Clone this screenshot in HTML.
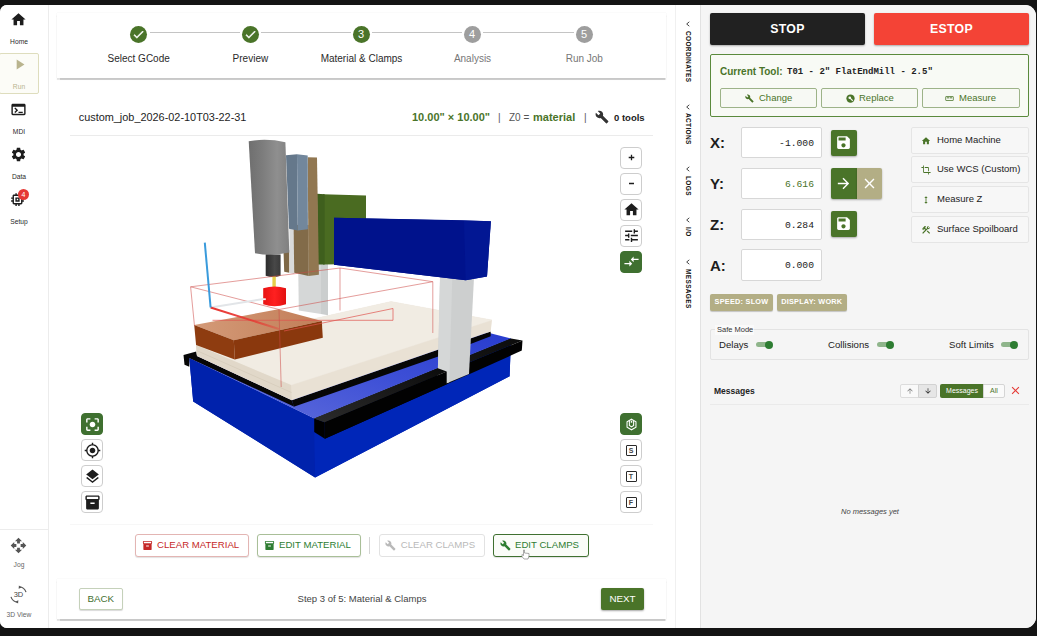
<!DOCTYPE html>
<html lang="en">
<head>
<meta charset="utf-8">
<title>Run Job - Material &amp; Clamps</title>
<style>
*{box-sizing:border-box;margin:0;padding:0}
html,body{width:1037px;height:636px;overflow:hidden;background:#141414;font-family:"Liberation Sans",sans-serif;color:#222}
.abs{position:absolute}
#win{position:absolute;left:0;top:5px;width:1036px;height:623px;background:#fff;border-radius:7px 11px 11px 7px;overflow:hidden}
/* everything inside #win is positioned in page coords via this wrapper */
#pg{position:absolute;left:0;top:-5px;width:1037px;height:636px}
svg{display:block;overflow:visible}
/* sidebar */
#side{left:0;top:0;width:49px;height:636px;border-right:1px solid #ececec;background:#fff}
.nav{position:absolute;left:0;width:38px;text-align:center;font-size:6.700px;color:#2a2a2a}
.nav svg{position:absolute}
.nav span{position:absolute;left:0;width:38px;text-align:center}
/* stepper */
.card{background:#fff;box-shadow:0 1.500px 1px rgba(0,0,0,.2),0 0 1px rgba(0,0,0,.1)}
.step{position:absolute;top:25.500px;width:17px;height:17px;border-radius:50%;background:#4a7429;color:#fff;font-size:11px;line-height:17px;text-align:center}
.step.g{background:#9e9e9e}
.slabel{position:absolute;top:52px;width:120px;text-align:center;font-size:10px;color:#2a2a2a;line-height:13px}
.slabel.g{color:#777}
.sline{position:absolute;top:32px;height:1px;background:#c4c4c4}
/* viewer buttons */
.vb{position:absolute;width:22px;height:21.500px;border:1px solid #cdcdcd;border-radius:4px;background:#fff}
.vb.on{background:#3f7030;border-color:#3f7030}
.vb svg{position:absolute;left:1.500px;top:1.250px}
/* action buttons */
.ab{position:absolute;top:534px;height:22.500px;border:1px solid;border-radius:3px;font-size:9.650px;line-height:20px;white-space:nowrap;background:#fff}
.ab svg{position:absolute;left:5.500px;top:5px}
.ab span{position:absolute;left:21px;top:0}
/* right panel */
#right{left:700px;top:0;width:337px;height:636px;background:#f5f5f5;border-left:1px solid #e2e2e2}
.big{position:absolute;top:13px;height:32px;border-radius:2px;color:#fff;font-weight:bold;font-size:12.300px;letter-spacing:.3px;line-height:32px;text-align:center;box-shadow:0 1px 2px rgba(0,0,0,.3)}
.tb{position:absolute;top:88px;height:20px;border:1px solid #9db388;border-radius:2px;font-size:9.500px;line-height:18.500px;color:#4a7429;background:#f7f9f4}
.tb svg{position:absolute;top:5px}
.tb span{position:absolute;top:0}
.ax{position:absolute;left:710px;font-size:15px;font-weight:bold;color:#1d1d1d;line-height:20px}
.inp{position:absolute;left:741px;width:81px;height:31.500px;border:1px solid #d7d7d7;border-radius:2px;background:#fff;font-family:"Liberation Mono",monospace;font-size:9.700px;line-height:31.500px;text-align:right;padding-right:7px;color:#222}
.sq{position:absolute;width:25.500px;height:25.500px;background:#4a7429;border-radius:2px;box-shadow:0 1px 2px rgba(0,0,0,.3)}
.sq svg{position:absolute;left:4px;top:4px}
.rb{position:absolute;left:911px;width:118px;height:27.200px;border:1px solid #e5e5e5;border-radius:2px;background:#f7f7f7;font-size:9.500px;line-height:24.500px;color:#222}
.rb svg{position:absolute;left:9px;top:8px}
.rb span{position:absolute;left:25px;top:0;white-space:nowrap}
.chip{position:absolute;top:294px;height:16.500px;border-radius:2px;background:#b3ae85;color:#fff;font-size:7.300px;font-weight:bold;line-height:16.500px;text-align:center;letter-spacing:.25px;box-shadow:0 1px 1px rgba(0,0,0,.2)}
.tg{position:absolute;top:340.500px;width:17px;height:8px}
.tg i{position:absolute;left:0;top:1.5px;width:14px;height:5px;border-radius:3px;background:#8fb58b}
.tg b{position:absolute;right:0;top:0;width:8px;height:8px;border-radius:50%;background:#2e7d32}
.tl{position:absolute;top:339px;font-size:9.600px;line-height:12px;color:#222;white-space:nowrap}
.vt{position:absolute;left:682px;width:12px;font-size:6.500px;font-weight:bold;letter-spacing:.35px;color:#111;writing-mode:vertical-rl;white-space:nowrap;line-height:12px}
.vc{position:absolute;left:684px;width:8px;height:8px}
</style>
</head>
<body>
<div id="win"><div id="pg">

<!-- SIDEBAR -->
<div id="side" class="abs">
  <div class="nav" style="top:10px;height:40px">
    <svg style="left:10px;top:1px" width="17" height="17" viewBox="0 0 24 24"><path fill="#1d1d1d" d="M10 20v-6h4v6h5v-8h3L12 3 2 12h3v8z"/></svg>
    <span style="top:28px">Home</span>
  </div>
  <div class="abs" style="left:-1px;top:53px;width:40px;height:41px;border:1px solid #deddbd;border-radius:2px;background:#fcfcf7"></div>
  <div class="nav" style="top:55px;height:40px;color:#b9b48e">
    <svg style="left:11px;top:1px" width="17" height="17" viewBox="0 0 24 24"><path fill="#b9b48e" d="M8 5v14l11-7z"/></svg>
    <span style="top:28px">Run</span>
  </div>
  <div class="nav" style="top:100px;height:40px">
    <svg style="left:10px;top:1px" width="17" height="17" viewBox="0 0 24 24"><path fill="#1d1d1d" d="M20 4H4c-1.11 0-2 .9-2 2v12c0 1.1.89 2 2 2h16c1.1 0 2-.9 2-2V6c0-1.1-.89-2-2-2zm0 14H4V8h16v10zm-2-1h-6v-2h6v2zM7.500 17l-1.410-1.410L8.670 13l-2.590-2.590L7.500 9l4 4-4 4z"/></svg>
    <span style="top:28px">MDI</span>
  </div>
  <div class="nav" style="top:145px;height:40px">
    <svg style="left:10px;top:1px" width="17" height="17" viewBox="0 0 24 24"><path fill="#1d1d1d" d="M19.140 12.940c.04-.3.06-.61.06-.94 0-.32-.02-.64-.07-.94l2.030-1.580c.18-.14.23-.41.12-.61l-1.920-3.320c-.12-.22-.37-.29-.59-.22l-2.390.96c-.5-.38-1.030-.7-1.620-.94l-.36-2.540c-.04-.24-.24-.41-.48-.41h-3.840c-.24 0-.43.17-.47.41l-.36 2.540c-.59.24-1.130.57-1.620.94l-2.390-.96c-.22-.08-.47 0-.59.22L2.740 8.870c-.12.21-.08.47.12.61l2.030 1.580c-.05.3-.09.63-.09.94s.02.640.07.940l-2.030 1.580c-.18.14-.23.41-.12.61l1.920 3.320c.12.22.37.29.59.22l2.390-.96c.5.38 1.030.7 1.620.94l.36 2.540c.05.24.24.41.48.41h3.840c.24 0 .44-.17.47-.41l.36-2.540c.59-.24 1.130-.56 1.620-.94l2.390.96c.22.08.47 0 .59-.22l1.920-3.320c.12-.22.07-.47-.12-.61l-2.010-1.580zM12 15.600c-1.980 0-3.600-1.620-3.600-3.600s1.620-3.600 3.600-3.600 3.600 1.620 3.600 3.600-1.620 3.600-3.600 3.600z"/></svg>
    <span style="top:28px">Data</span>
  </div>
  <div class="nav" style="top:190px;height:40px">
    <svg style="left:9px;top:1px" width="17" height="17" viewBox="0 0 24 24"><path fill="#1d1d1d" d="M15 9H9v6h6V9zm-2 4h-2v-2h2v2zm8-2V9h-2V7c0-1.100-.9-2-2-2h-2V3h-2v2h-2V3H9v2H7c-1.100 0-2 .9-2 2v2H3v2h2v2H3v2h2v2c0 1.100.9 2 2 2h2v2h2v-2h2v2h2v-2h2c1.100 0 2-.9 2-2v-2h2v-2h-2v-2h2zm-4 6H7V7h10v10z"/></svg>
    <div class="abs" style="left:18px;top:-1px;width:11px;height:11px;border-radius:50%;background:#e53935;color:#fff;font-size:7px;line-height:11px;text-align:center">4</div>
    <span style="top:28px">Setup</span>
  </div>
  <div class="abs" style="left:0;top:529px;width:48px;height:1px;background:#ececec"></div>
  <div class="nav" style="top:536px;height:40px;color:#666">
    <svg style="left:10px;top:1px" width="17" height="17" viewBox="0 0 24 24"><path fill="#555" d="M10 9h4V6h3l-5-5-5 5h3v3zm-1 1H6V7l-5 5 5 5v-3h3v-4zm14 2l-5-5v3h-3v4h3v3l5-5zm-9 3h-4v3H7l5 5 5-5h-3v-3z"/></svg>
    <span style="top:25px">Jog</span>
  </div>
  <div class="nav" style="top:585px;height:40px;color:#666">
    <svg style="left:9px;top:0px" width="19" height="19" viewBox="0 0 24 24"><g fill="none" stroke="#555" stroke-width="1.5"><path d="M13 2.200A10 10 0 0 1 21.500 9"/><path d="M11 21.800A10 10 0 0 1 2.500 15"/></g><path fill="#555" d="M12.500 .5l3.500 2.500-3.800 1.800zM11.500 23.500l-3.500-2.500 3.800-1.800z"/><text x="12" y="15.500" font-family="Liberation Sans, sans-serif" font-size="9.500" text-anchor="middle" fill="#444">3D</text></svg>
    <span style="top:26px">3D View</span>
  </div>
</div>

<!-- STEPPER -->
<div class="abs card" id="stepper" style="left:57px;top:13px;width:609px;height:65px"></div>
<div class="sline" style="left:149.500px;width:90px"></div>
<div class="sline" style="left:261px;width:89.500px"></div>
<div class="sline" style="left:372px;width:89.500px"></div>
<div class="sline" style="left:483px;width:90.500px"></div>
<div class="step" style="left:130px"><svg style="position:absolute;left:2px;top:2px" width="13" height="13" viewBox="0 0 24 24"><path fill="#fff" stroke="#fff" stroke-width="1" d="M9 16.170L4.830 12l-1.420 1.410L9 19 21 7l-1.410-1.410z"/></svg></div>
<div class="step" style="left:241.500px"><svg style="position:absolute;left:2px;top:2px" width="13" height="13" viewBox="0 0 24 24"><path fill="#fff" stroke="#fff" stroke-width="1" d="M9 16.170L4.830 12l-1.420 1.410L9 19 21 7l-1.410-1.410z"/></svg></div>
<div class="step" style="left:352.500px">3</div>
<div class="step g" style="left:463.500px">4</div>
<div class="step g" style="left:575.500px">5</div>
<div class="slabel" style="left:78.7px">Select GCode</div>
<div class="slabel" style="left:190.4px">Preview</div>
<div class="slabel" style="left:301.5px">Material &amp; Clamps</div>
<div class="slabel g" style="left:412.5px">Analysis</div>
<div class="slabel g" style="left:524.3px">Run Job</div>

<!-- MAIN VIEW -->
<div class="abs" id="main" style="left:0;top:0;width:700px;height:636px">
<div class="abs" style="left:78.700px;top:111px;font-size:10.900px;line-height:13px;color:#1d1d1d">custom_job_2026-02-10T03-22-31</div>
<div class="abs" style="left:412px;top:111px;font-size:11px;line-height:13px;font-weight:bold;color:#4a7429;white-space:nowrap">10.00" × 10.00"</div>
<div class="abs" style="left:498px;top:111px;font-size:10px;line-height:13px;color:#555">|</div>
<div class="abs" style="left:509px;top:111px;font-size:10px;line-height:13px;color:#555;white-space:nowrap">Z0 =</div>
<div class="abs" style="left:533px;top:111px;font-size:11px;line-height:13px;font-weight:bold;color:#4a7429">material</div>
<div class="abs" style="left:584px;top:111px;font-size:10px;line-height:13px;color:#555">|</div>
<div class="abs" style="left:595px;top:110px"><svg width="14" height="14" viewBox="0 0 24 24" ><path fill="#333" d="M22.700 19l-9.100-9.100c.9-2.300.4-5-1.500-6.900-2-2-5-2.400-7.400-1.300L9 6 6 9 1.600 4.700C.4 7.100.9 10.100 2.900 12.100c1.900 1.900 4.600 2.400 6.900 1.500l9.100 9.100c.4.4 1 .4 1.400 0l2.300-2.300c.5-.4.5-1.100.1-1.400z"/></svg></div>
<div class="abs" style="left:614px;top:111px;font-size:9.500px;line-height:13px;font-weight:bold;color:#222;white-space:nowrap">0 tools</div>
<div class="abs" style="left:70px;top:135px;width:583px;height:1px;background:#ebebeb"></div>
<!--SCENE-->
<svg class="abs" style="left:0;top:0" width="700" height="636" viewBox="0 0 700 636">
<defs>
<linearGradient id="gcyl" x1="0" x2="1" y1="0" y2="0"><stop offset="0" stop-color="#6f6f6f"/><stop offset=".35" stop-color="#7d7d7d"/><stop offset=".7" stop-color="#8f8f8f"/><stop offset="1" stop-color="#808080"/></linearGradient>
<linearGradient id="gcol" x1="0" x2="1" y1="0" y2="0"><stop offset="0" stop-color="#2c2c2c"/><stop offset=".6" stop-color="#484848"/><stop offset="1" stop-color="#3a3a3a"/></linearGradient>
<linearGradient id="gtop" x1="0" x2="1" y1="1" y2="0"><stop offset="0" stop-color="#6370dc"/><stop offset=".5" stop-color="#3d4fd6"/><stop offset="1" stop-color="#2237cc"/></linearGradient>
<linearGradient id="grail" x1="0" x2="1" y1="1" y2="0"><stop offset="0" stop-color="#2b2b2b"/><stop offset="1" stop-color="#0c0c0c"/></linearGradient>
<linearGradient id="gred" x1="0" x2="1" y1="0" y2="0"><stop offset="0" stop-color="#e81212"/><stop offset=".5" stop-color="#ff2020"/><stop offset="1" stop-color="#e21010"/></linearGradient>
<linearGradient id="gxax" x1="0" x2="1" y1="0" y2="0"><stop offset="0" stop-color="#e8342f"/><stop offset=".6" stop-color="#e8342f" stop-opacity=".85"/><stop offset="1" stop-color="#e8342f" stop-opacity=".3"/></linearGradient>
<linearGradient id="gstk" x1="0" x2="1" y1="0" y2="0"><stop offset="0" stop-color="#d49a78"/><stop offset="1" stop-color="#c27e58"/></linearGradient>
</defs>
<polygon points="189.3,358 314.2,418.4 511,338.4 509.6,376.3 315.1,477.4 193.2,401.5" fill="#0025b4" />
<polygon points="189.3,358 314.2,418.4 315.1,477.4 193.2,401.5" fill="#0022ac" />
<polygon points="314.2,418.4 511,338.4 509.6,376.3 315.1,477.4" fill="#0026b8" />
<polygon points="189.3,358 391,308 511,338.4 314.2,418.4" fill="url(#gtop)" />
<polygon points="183.5,355 196.3,351.5 197,356 291.9,400.3 293.8,406.5 189.3,358 189.3,366.7 184.5,364.8" fill="#060606" />
<polygon points="291.9,400.3 490.7,331.6 490.7,336.3 437.5,356.7 293.8,406.7" fill="#060606" />
<polygon points="314.2,418.4 511,338.4 522.5,340.4 324.8,422.2" fill="url(#grail)" />
<polygon points="324.8,422.2 522.5,340.4 521.8,350.6 324.8,438.7" fill="#020202" />
<polygon points="314.2,418.4 324.8,422.2 324.8,438.7 314.2,431.9" fill="#000" />
<polygon points="196,345 391,301.5 492,320 490.7,331.6 291.9,400.3 197,356" fill="#e9e1d4" />
<polygon points="196,345 391,301.5 492,320 291,385" fill="#f1ece3" stroke="#f1ece3" stroke-width=".4"/>
<polygon points="196,345 291,385 291.9,400.3 197,356" fill="#e1d8c9" />
<line x1="196.500" y1="350.500" x2="291.500" y2="392.500" stroke="#cfc4b2" stroke-width=".5"/>
<polygon points="298,250 321,250 321,314.1 298.8,310.4" fill="#d5d7d7" />
<polygon points="321,250 328,250 328,315.3 321,314.1" fill="#cbcece" />
<polygon points="194.2,325.1 278.3,309.3 321.8,320.9 233.8,340.2" fill="url(#gstk)" />
<polygon points="194.2,325.1 233.8,340.2 234.8,359.6 196.1,344.9" fill="#8e3c10" />
<polygon points="233.8,340.2 321.8,320.9 322.8,337.7 234.8,359.6" fill="#8a380d" />
<g stroke="#e0534d" stroke-width=".7" fill="none"><path d="M212.500 320.300H393V308.500L284 331"/></g>
<polygon points="440.2,270 474.4,270 469,374 447.4,383 437.5,386" fill="#cdcfcf" />
<polygon points="440.2,270 452.5,270 449.3,382.2 437.5,386" fill="#d5d7d7" />
<polygon points="314.2,418.4 437.9,368.2 446.7,371.6 324.8,422.2" fill="url(#grail)" />
<polygon points="324.8,422.2 446.7,371.6 446.7,384.2 324.8,438.7" fill="#020202" />
<polygon points="323,194.2 366,195.6 366,264 323,264.4" fill="#4a6b21" />
<polygon points="317,193.8 324.7,194.3 324.7,264.4 318,264.4" fill="#3f5f1d" />
<polygon points="334,217.8 490.9,221.3 487,276.4 465.7,280.3 334,264.8" fill="#01158f" />
<polygon points="334,217.8 464,220.3 465.7,280.3 334,264.8" fill="#00128c" />
<polygon points="464,220.3 490.9,221.3 487,276.4 465.7,280.3" fill="#021793" />
<polygon points="283.5,250 289.3,250 289.3,272.7 284.2,271.8" fill="#7e6847" />
<polygon points="289.3,225 293.8,225 294.2,274 289.6,273" fill="#d9dada" />
<polygon points="293.6,225 308.6,225 308.6,276 294.2,272.7" fill="#826b49" />
<polygon points="307.7,157.2 317,157.6 318.9,274.7 308.6,276" fill="#917751" />
<polygon points="286,155.3 297,154.3 297.8,230.5 289,228.8" fill="#65788b" />
<polygon points="297,154.3 307.7,155.5 307.9,229.2 297.8,230.5" fill="#72879c" />
<path d="M248.700 141.200Q267 138 285.400 142.300L289.300 252.600Q272 256.500 255 253.200Z" fill="url(#gcyl)"/>
<path d="M265.700 254.500H280.600V275.800Q273 278.200 265.700 275.800Z" fill="url(#gcol)"/>
<rect x="272.400" y="276.500" width="3.400" height="11" fill="#e6d04a"/>
<g stroke="#cf4a46" stroke-width=".6" fill="none" opacity=".9"><path d="M190.600 286.800L340 268L432.800 281.700L279 309.500Z"/><path d="M190.600 286.800L194.500 326M340 268V310.500M432.800 281.700V333M279 309.500L281.200 387"/></g>
<line x1="210.600" y1="307.500" x2="265" y2="298.800" stroke="#e2e5e8" stroke-width="2"/>
<line x1="210.600" y1="307.500" x2="279" y2="329" stroke="url(#gxax)" stroke-width="2"/>
<line x1="204.800" y1="242.700" x2="210.600" y2="307.500" stroke="#3a9bdc" stroke-width="2"/>
<path d="M263.200 288.300Q274.600 284.500 286 288.300V304.300Q274.600 308.300 263.200 304.300Z" fill="url(#gred)"/>
<rect x="262.800" y="298.300" width="3" height="1.800" fill="#f4f4f4"/>
</svg>
<!--/SCENE-->
<!--VBTNS-->
<div class="vb" style="left:620px;top:147px"><svg width="17" height="17" viewBox="0 0 17 17"><path d="M5.700 8.500h5.600M8.500 5.700v5.600" stroke="#1d1d1d" stroke-width="1.300" fill="none"/></svg></div>
<div class="vb" style="left:620px;top:173px"><svg width="17" height="17" viewBox="0 0 17 17"><path d="M6 8.500h5" stroke="#1d1d1d" stroke-width="1.300" fill="none"/></svg></div>
<div class="vb" style="left:620px;top:199px"><svg width="17" height="17" viewBox="0 0 24 24"><path fill="#1d1d1d" d="M10 20v-6h4v6h5v-8h3L12 3 2 12h3v8z"/></svg></div>
<div class="vb" style="left:620px;top:225px"><svg width="17" height="17" viewBox="0 0 24 24"><path fill="#1d1d1d" d="M3 17v2h6v-2H3zM3 5v2h10V5H3zm10 16v-2h8v-2h-8v-2h-2v6h2zM7 9v2H3v2h4v2h2V9H7zm14 4v-2H11v2h10zm-6-4h2V7h4V5h-4V3h-2v6z"/></svg></div>
<div class="vb on" style="left:620px;top:251px"><svg width="17" height="17" viewBox="0 0 24 24"><path fill="#fff" d="M9.010 14H2v2h7.010v3L13 15l-3.990-4v3zm5.980-1v-3H22V8h-7.010V5L11 9l3.990 4z"/></svg></div>
<div class="vb on" style="left:81px;top:413.4px"><svg width="17" height="17" viewBox="0 0 24 24"><path fill="#fff" d="M12 8c-2.210 0-4 1.790-4 4s1.790 4 4 4 4-1.790 4-4-1.790-4-4-4zm-7 7H3v4c0 1.100.9 2 2 2h4v-2H5v-4zM5 5h4V3H5c-1.100 0-2 .9-2 2v4h2V5zm14-2h-4v2h4v4h2V5c0-1.100-.9-2-2-2zm0 16h-4v2h4c1.100 0 2-.9 2-2v-4h-2v4z"/></svg></div>
<div class="vb" style="left:81px;top:439.4px"><svg width="17" height="17" viewBox="0 0 24 24"><path fill="#1d1d1d" d="M12 8c-2.210 0-4 1.790-4 4s1.790 4 4 4 4-1.790 4-4-1.790-4-4-4zm8.940 3c-.46-4.170-3.770-7.480-7.940-7.940V1h-2v2.060C6.830 3.520 3.520 6.830 3.060 11H1v2h2.060c.46 4.170 3.770 7.480 7.940 7.940V23h2v-2.060c4.170-.46 7.480-3.770 7.940-7.940H23v-2h-2.060zM12 19c-3.870 0-7-3.130-7-7s3.130-7 7-7 7 3.130 7 7-3.130 7-7 7z"/></svg></div>
<div class="vb" style="left:81px;top:465.4px"><svg width="17" height="17" viewBox="0 0 24 24"><path fill="#1d1d1d" d="M11.990 18.540l-7.370-5.730L3 14.070l9 7 9-7-1.630-1.270-7.380 5.740zM12 16l7.360-5.730L21 9l-9-7-9 7 1.630 1.270L12 16z"/></svg></div>
<div class="vb" style="left:81px;top:491.4px"><svg width="17" height="17" viewBox="0 0 24 24"><path fill="#1d1d1d" d="M20 2H4c-1 0-2 .9-2 2v3.010c0 .72.43 1.340 1 1.690V20c0 1.100 1.100 2 2 2h14c.9 0 2-.9 2-2V8.700c.57-.35 1-.97 1-1.690V4c0-1.100-1-2-2-2zm-5 12H9v-2h6v2zm5-7H4V4h16v3z"/></svg></div>
<div class="vb on" style="left:620px;top:413.4px"><svg width="17" height="17" viewBox="0 0 24 24"><path d="M12 4.500l6.300 3.600v7.800L12 19.500l-6.300-3.600V8.100z" fill="none" stroke="#fff" stroke-width="1.500"/><path d="M9 6.800v6.700l3 2 3-2V6.800" fill="none" stroke="#fff" stroke-width="1.500"/><path d="M11 6.500h2v3h-2z" fill="#fff"/></svg></div>
<div class="vb" style="left:620px;top:439.4px"><div class="abs" style="left:4.500px;top:4.250px;width:11px;height:11px;border:1px solid #2a2a2a;border-radius:1px;font-size:7px;font-weight:bold;line-height:9px;text-align:center;color:#444">S</div></div>
<div class="vb" style="left:620px;top:465.4px"><div class="abs" style="left:4.500px;top:4.250px;width:11px;height:11px;border:1px solid #2a2a2a;border-radius:1px;font-size:7px;font-weight:bold;line-height:9px;text-align:center;color:#444">T</div></div>
<div class="vb" style="left:620px;top:491.4px"><div class="abs" style="left:4.500px;top:4.250px;width:11px;height:11px;border:1px solid #2a2a2a;border-radius:1px;font-size:7px;font-weight:bold;line-height:9px;text-align:center;color:#444">F</div></div>
<div class="abs" style="left:70px;top:524px;width:583px;height:1px;background:#f7f7f7"></div>
<div class="ab" style="left:135px;width:113.500px;border-color:#e3b5b3;color:#c62828;box-shadow:0 1px 1px rgba(0,0,0,.12)"><svg width="11" height="11" viewBox="0 0 24 24" ><path fill="#c62828" d="M20 2H4c-1 0-2 .9-2 2v3.010c0 .72.43 1.340 1 1.690V20c0 1.100 1.100 2 2 2h14c.9 0 2-.9 2-2V8.700c.57-.35 1-.97 1-1.690V4c0-1.100-1-2-2-2zm-5 12H9v-2h6v2zm5-7H4V4h16v3z"/></svg><span>CLEAR MATERIAL</span></div>
<div class="ab" style="left:257px;width:104px;border-color:#a9bf98;color:#2e7d32;box-shadow:0 1px 1px rgba(0,0,0,.12)"><svg width="11" height="11" viewBox="0 0 24 24" ><path fill="#2e7d32" d="M20 2H4c-1 0-2 .9-2 2v3.010c0 .72.43 1.340 1 1.690V20c0 1.100 1.100 2 2 2h14c.9 0 2-.9 2-2V8.700c.57-.35 1-.97 1-1.690V4c0-1.100-1-2-2-2zm-5 12H9v-2h6v2zm5-7H4V4h16v3z"/></svg><span>EDIT MATERIAL</span></div>
<div class="abs" style="left:369px;top:537px;width:1px;height:17px;background:#d5d5d5"></div>
<div class="ab" style="left:378.800px;width:106px;border-color:#e2e2e2;color:#b9b9b9"><svg width="11" height="11" viewBox="0 0 24 24" ><path fill="#b9b9b9" d="M22.700 19l-9.100-9.100c.9-2.300.4-5-1.500-6.900-2-2-5-2.400-7.400-1.300L9 6 6 9 1.600 4.700C.4 7.100.9 10.100 2.900 12.100c1.900 1.900 4.600 2.400 6.900 1.500l9.100 9.100c.4.4 1 .4 1.400 0l2.300-2.300c.5-.4.5-1.100.1-1.400z"/></svg><span>CLEAR CLAMPS</span></div>
<div class="ab" style="left:493px;width:95.800px;border-color:#3f7030;color:#2e7d32;background:#fafcf8;box-shadow:0 1px 1px rgba(0,0,0,.12)"><svg width="11" height="11" viewBox="0 0 24 24" ><path fill="#2e7d32" d="M22.700 19l-9.100-9.100c.9-2.300.4-5-1.500-6.900-2-2-5-2.400-7.400-1.300L9 6 6 9 1.600 4.700C.4 7.100.9 10.100 2.900 12.100c1.900 1.900 4.600 2.400 6.900 1.500l9.100 9.100c.4.4 1 .4 1.400 0l2.300-2.300c.5-.4.5-1.100.1-1.400z"/></svg><span>EDIT CLAMPS</span></div>
<svg class="abs" style="left:521px;top:549px" width="9" height="11" viewBox="0 0 9 11"><path d="M2.500 1v5.500L1 5.500v2L3 10h4l1-3V4.500L3.500 4V1z" fill="#fff" stroke="#888" stroke-width=".7"/></svg>
<div class="abs card" style="left:57px;top:578.500px;width:609px;height:40.500px"></div>
<div class="abs" style="left:79px;top:588.200px;width:43.500px;height:22px;border:1px solid #c5d1ba;border-radius:2px;font-size:9.800px;line-height:20.500px;text-align:center;color:#3f7030;box-shadow:0 1px 1px rgba(0,0,0,.15);background:#fff">BACK</div>
<div class="abs" style="left:262px;top:593px;width:200px;text-align:center;font-size:9.500px;line-height:12px;color:#444">Step 3 of 5: Material &amp; Clamps</div>
<div class="abs" style="left:601px;top:588px;width:43px;height:22px;border-radius:2px;font-size:9.800px;line-height:22.500px;text-align:center;color:#fff;background:#4a7429;box-shadow:0 1px 2px rgba(0,0,0,.35)">NEXT</div>
</div>

<!-- VERTICAL TABS -->
<div class="abs" id="vtabs" style="left:0;top:0">
<div class="abs" style="left:675px;top:0;width:1px;height:636px;background:#f0f0f0"></div>
<svg class="vc" style="top:20px" viewBox="0 0 8 8"><path d="M5.300 1.800L2.700 4l2.600 2.200" fill="none" stroke="#333" stroke-width=".9"/></svg>
<div class="vt" style="top:31px">COORDINATES</div>
<svg class="vc" style="top:103px" viewBox="0 0 8 8"><path d="M5.300 1.800L2.700 4l2.600 2.200" fill="none" stroke="#333" stroke-width=".9"/></svg>
<div class="vt" style="top:113px">ACTIONS</div>
<svg class="vc" style="top:165px" viewBox="0 0 8 8"><path d="M5.300 1.800L2.700 4l2.600 2.200" fill="none" stroke="#333" stroke-width=".9"/></svg>
<div class="vt" style="top:176px">LOGS</div>
<svg class="vc" style="top:216px" viewBox="0 0 8 8"><path d="M5.300 1.800L2.700 4l2.600 2.200" fill="none" stroke="#333" stroke-width=".9"/></svg>
<div class="vt" style="top:227px">I/O</div>
<svg class="vc" style="top:258px" viewBox="0 0 8 8"><path d="M5.300 1.800L2.700 4l2.600 2.200" fill="none" stroke="#333" stroke-width=".9"/></svg>
<div class="vt" style="top:269px">MESSAGES</div>
</div>

<!-- RIGHT PANEL -->
<div id="right" class="abs"></div>
<div class="abs" id="rp" style="left:0;top:0">
<div class="big" style="left:710px;width:155px;background:#212121">STOP</div>
<div class="big" style="left:874px;width:155px;background:#f44336">ESTOP</div>
<div class="abs" style="left:710px;top:54px;width:319px;height:63px;border:1px solid #5a8a3c;border-radius:2px;background:#f8faf5"></div>
<div class="abs" style="left:720px;top:66px;font-size:10px;line-height:12px;font-weight:bold;color:#4a7429;white-space:nowrap">Current Tool:</div>
<div class="abs" style="left:787px;top:66px;font-family:'Liberation Mono',monospace;font-size:9px;line-height:12px;font-weight:bold;color:#222;white-space:nowrap">T01 - 2" FlatEndMill - 2.5"</div>
<div class="tb" style="left:720px;width:97px"><svg width="9" height="9" viewBox="0 0 24 24" style="left:24px"><path fill="#4a7429" d="M22.700 19l-9.100-9.100c.9-2.300.4-5-1.500-6.900-2-2-5-2.400-7.400-1.300L9 6 6 9 1.600 4.700C.4 7.100.9 10.100 2.900 12.100c1.900 1.900 4.600 2.400 6.900 1.500l9.100 9.100c.4.4 1 .4 1.400 0l2.300-2.300c.5-.4.5-1.100.1-1.400z"/></svg><span style="left:38px">Change</span></div>
<div class="tb" style="left:821px;width:97px"><svg width="9" height="9" viewBox="0 0 24 24" style="left:24px"><circle cx="12" cy="12" r="11" fill="#4a7429"/><circle cx="10" cy="10" r="3.500" fill="#f7f9f4"/><path d="M11 11l7 7" stroke="#f7f9f4" stroke-width="3"/></svg><span style="left:37px">Replace</span></div>
<div class="tb" style="left:922px;width:98px"><svg width="9" height="9" viewBox="0 0 24 24" style="left:22px"><path fill="#4a7429" d="M21 6H3c-1.100 0-2 .9-2 2v8c0 1.100.9 2 2 2h18c1.100 0 2-.9 2-2V8c0-1.100-.9-2-2-2zm0 10H3V8h2v4h2V8h2v4h2V8h2v4h2V8h2v4h2V8h2v8z"/></svg><span style="left:36px">Measure</span></div>

<div class="ax" style="top:133.3px">X:</div>
<div class="ax" style="top:174.3px">Y:</div>
<div class="ax" style="top:215.3px">Z:</div>
<div class="ax" style="top:256px">A:</div>
<div class="inp" style="top:126.5px">-1.000</div>
<div class="inp" style="top:167.5px;color:#4a7429">6.616</div>
<div class="inp" style="top:208.5px">0.284</div>
<div class="inp" style="top:249px">0.000</div>
<div class="sq" style="left:831px;top:130px"><svg width="17" height="17" viewBox="0 0 24 24" ><path fill="#fff" d="M17 3H5c-1.110 0-2 .9-2 2v14c0 1.100.89 2 2 2h14c1.100 0 2-.9 2-2V7l-4-4zm-5 16c-1.660 0-3-1.340-3-3s1.340-3 3-3 3 1.340 3 3-1.340 3-3 3zm3-10H5V5h10v4z"/></svg></div>
<div class="sq" style="left:831px;top:168px;height:31px;border-radius:2px 0 0 2px"><svg style="top:7px" width="17" height="17" viewBox="0 0 24 24" ><path fill="#fff" d="M12 4l-1.410 1.410L16.170 11H4v2h12.170l-5.580 5.590L12 20l8-8z"/></svg></div>
<div class="sq" style="left:856.500px;top:168px;height:31px;background:#b3ae85;border-radius:0 2px 2px 0"><svg style="top:7px" width="17" height="17" viewBox="0 0 24 24" ><path fill="#fff" d="M19 6.410L17.590 5 12 10.590 6.410 5 5 6.410 10.590 12 5 17.590 6.410 19 12 13.410 17.590 19 19 17.590 13.410 12z"/></svg></div>
<div class="sq" style="left:831px;top:211.300px"><svg width="17" height="17" viewBox="0 0 24 24" ><path fill="#fff" d="M17 3H5c-1.110 0-2 .9-2 2v14c0 1.100.89 2 2 2h14c1.100 0 2-.9 2-2V7l-4-4zm-5 16c-1.660 0-3-1.340-3-3s1.340-3 3-3 3 1.340 3 3-1.340 3-3 3zm3-10H5V5h10v4z"/></svg></div>

<div class="rb" style="top:126.500px"><svg width="10" height="10" viewBox="0 0 24 24" ><path fill="#4a7429" d="M10 20v-6h4v6h5v-8h3L12 3 2 12h3v8z"/></svg><span>Home Machine</span></div>
<div class="rb" style="top:156.300px"><svg width="10" height="10" viewBox="0 0 24 24" ><path fill="#4a7429" d="M17 15h2V7c0-1.100-.9-2-2-2H9v2h8v8zM7 17V1H5v4H1v2h4v10c0 1.100.9 2 2 2h10v4h2v-4h4v-2H7z"/></svg><span>Use WCS (Custom)</span></div>
<div class="rb" style="top:185.800px"><svg width="10" height="10" viewBox="0 0 24 24" ><path fill="#4a7429" d="M13 6.990h3L12 3 8 6.990h3v10.020H8L12 21l4-3.990h-3z"/></svg><span>Measure Z</span></div>
<div class="rb" style="top:215.500px"><svg width="10" height="10" viewBox="0 0 24 24" ><path fill="#4a7429" d="M13.783 15.172l2.121-2.121 5.996 5.996-2.121 2.121zM17.500 10c1.930 0 3.500-1.570 3.500-3.500 0-.58-.16-1.120-.41-1.600l-2.700 2.700-1.490-1.490 2.700-2.700c-.48-.25-1.020-.41-1.600-.41C15.570 3 14 4.570 14 6.500c0 .41.08.8.21 1.160l-1.850 1.850-1.780-1.780.71-.71-1.410-1.410L12 3.490c-1.170-1.170-3.070-1.170-4.240 0L4.220 7.030l1.410 1.410H2.810l-.71.71 3.540 3.540.71-.71V9.150l1.410 1.410.71-.71 1.780 1.780-7.410 7.410 2.120 2.120L16.340 9.790c.36.13.75.21 1.160.21z"/></svg><span>Surface Spoilboard</span></div>

<div class="chip" style="left:710px;width:63px">SPEED: SLOW</div>
<div class="chip" style="left:777px;width:69.500px">DISPLAY: WORK</div>

<div class="abs" style="left:710px;top:328.500px;width:319px;height:31px;border:1px solid #e3e3e3;border-radius:2px"></div>
<div class="abs" style="left:715px;top:324.500px;width:39px;height:10px;background:#fafafa;font-size:7.500px;line-height:10px;color:#333;padding-left:2px;white-space:nowrap">Safe Mode</div>
<div class="tl" style="left:719px">Delays</div>
<div class="tg" style="left:756px"><i></i><b></b></div>
<div class="tl" style="left:828px">Collisions</div>
<div class="tg" style="left:877px"><i></i><b></b></div>
<div class="tl" style="left:949px">Soft Limits</div>
<div class="tg" style="left:1001px"><i></i><b></b></div>

<div class="abs" style="left:714px;top:385.300px;font-size:8.500px;line-height:12px;font-weight:bold;color:#222">Messages</div>
<div class="abs" style="left:900px;top:384px;width:19px;height:14px;border:1px solid #dcdcdc;border-radius:2px 0 0 2px;background:#f9f9f9"><svg width="8" height="8" viewBox="0 0 24 24" style="position:absolute;left:5px;top:2px"><path fill="#777" d="M4 12l1.410 1.410L11 7.830V20h2V7.830l5.580 5.590L20 12l-8-8-8 8z"/></svg></div>
<div class="abs" style="left:918px;top:384px;width:19px;height:14px;border:1px solid #d2d2d2;border-radius:0 2px 2px 0;background:#e6e6e6"><svg width="8" height="8" viewBox="0 0 24 24" style="position:absolute;left:5px;top:2px"><path fill="#222" d="M20 12l-1.410-1.410L13 16.170V4h-2v12.170l-5.580-5.590L4 12l8 8 8-8z"/></svg></div>
<div class="abs" style="left:940px;top:384px;width:44px;height:14px;border-radius:2px 0 0 2px;background:#4a7429;color:#fff;font-size:7px;line-height:14px;text-align:center">Messages</div>
<div class="abs" style="left:983px;top:384px;width:22px;height:14px;border:1px solid #d5d5d5;border-radius:0 2px 2px 0;background:#fafafa;color:#4a7429;font-size:7px;line-height:12px;text-align:center">All</div>
<svg width="13" height="13" viewBox="0 0 24 24" class="abs" style="left:1009px;top:384px"><path fill="#e53935" d="M19 6.410L17.590 5 12 10.590 6.410 5 5 6.410 10.590 12 5 17.590 6.410 19 12 13.410 17.590 19 19 17.590 13.410 12z"/></svg>
<div class="abs" style="left:710px;top:404px;width:319px;height:1px;background:#eaeaea"></div>
<div class="abs" style="left:770px;top:507px;width:200px;text-align:center;font-size:7.500px;line-height:10px;font-style:italic;color:#444">No messages yet</div>
</div>

</div></div>
</body>
</html>
